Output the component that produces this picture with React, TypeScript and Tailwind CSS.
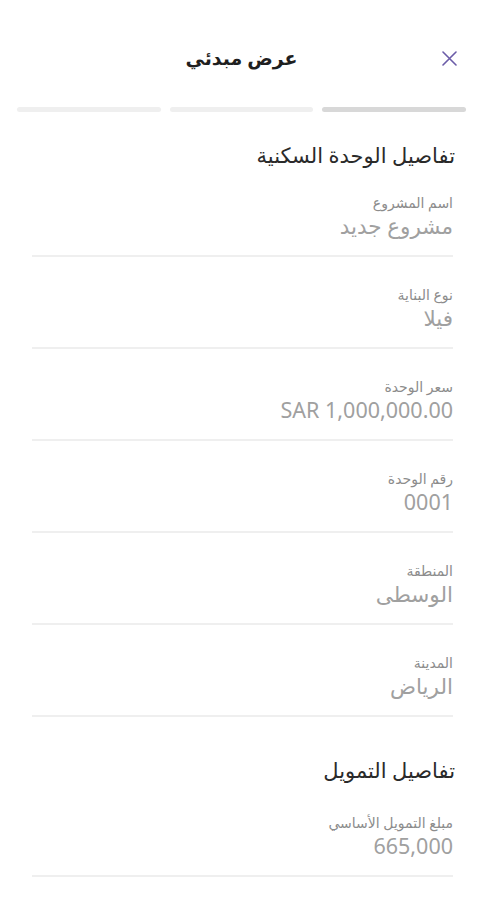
import React from 'react';

const fields1 = [
  { label: 'اسم المشروع', value: 'مشروع جديد' },
  { label: 'نوع البناية', value: 'فيلا' },
  { label: 'سعر الوحدة', value: 'SAR 1,000,000.00' },
  { label: 'رقم الوحدة', value: '0001' },
  { label: 'المنطقة', value: 'الوسطى' },
  { label: 'المدينة', value: 'الرياض' },
];

const fields2 = [{ label: 'مبلغ التمويل الأساسي', value: '665,000' }];

function Field({ label, value }: { label: string; value: string }) {
  return (
    <div className="flex flex-col items-start border-b-2 border-[#efefef] pt-[30px] pb-[16px]">
      <span className="text-[14px] leading-[16px] text-[#8c8c8c]">{label}</span>
      <span className="mt-[2px] text-[21.5px] leading-[26px] text-[#a0a0a0]" dir="auto">
        {value}
      </span>
    </div>
  );
}

export default function App() {
  return (
    <div
      dir="rtl"
      className="min-h-[900px] w-full bg-white"
      style={{ fontFamily: '"Noto Sans", "DejaVu Sans", sans-serif' }}
    >
      {/* Header */}
      <div className="relative mt-[30px] flex h-[56px] items-center justify-center">
        <button className="absolute right-[20px] top-1/2 flex h-[28px] w-[28px] -translate-y-1/2 items-center justify-center">
          <svg width="15" height="15" viewBox="0 0 15 15" fill="none">
            <path d="M1 1L14 14M14 1L1 14" stroke="#6b5ca8" strokeWidth="1.6" strokeLinecap="round" />
          </svg>
        </button>
        <h1 className="text-[19px] font-semibold text-[#1f1f1f]">عرض مبدئي</h1>
      </div>

      {/* Steps */}
      <div className="mt-[21px] flex gap-[9px] px-[17px]">
        <div className="h-[5px] flex-1 rounded-full bg-[#d8d8d8]" />
        <div className="h-[5px] flex-1 rounded-full bg-[#efefef]" />
        <div className="h-[5px] flex-1 rounded-full bg-[#efefef]" />
      </div>

      {/* Unit details */}
      <div className="mt-[33px] pr-[30px] pl-[32px]">
        <h2 className="-mr-[2px] text-[21px] leading-[20px] font-medium text-[#2a2a2a]">
          تفاصيل الوحدة السكنية
        </h2>
        {fields1.map((f) => (
          <Field key={f.label} label={f.label} value={f.value} />
        ))}

        <h2 className="-mr-[2px] mt-[43px] mb-[5px] text-[21px] leading-[20px] font-medium text-[#2a2a2a]">
          تفاصيل التمويل
        </h2>
        {fields2.map((f) => (
          <Field key={f.label} label={f.label} value={f.value} />
        ))}
      </div>
    </div>
  );
}
